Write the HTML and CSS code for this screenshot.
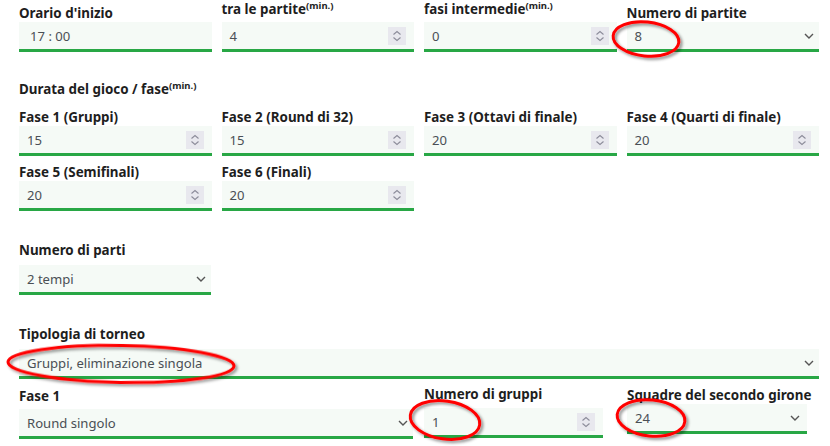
FILE: index.html
```html
<!DOCTYPE html>
<html lang="it">
<head>
<meta charset="utf-8">
<title>Impostazioni torneo</title>
<link rel="stylesheet" href="styles.css">
</head>
<body>
<div class="page">
  <div class="grid4 row-a">
    <div class="field">
      <div class="label">Orario d'inizio</div>
      <div class="control time"><span class="val">17 : 00</span></div>
    </div>
    <div class="field">
      <div class="label lbl-sup">tra le partite<sup>(min.)</sup></div>
      <div class="control"><span class="val">4</span><span class="spin"><svg width="18" height="18" viewBox="0 0 18 18"><path d="M5.5 7.5 L9 4.5 L12.5 7.5 M5.5 10.5 L9 13.5 L12.5 10.5" fill="none" stroke="#8c8c9a" stroke-width="1.1"/></svg></span></div>
    </div>
    <div class="field">
      <div class="label lbl-sup">fasi intermedie<sup>(min.)</sup></div>
      <div class="control"><span class="val">0</span><span class="spin"><svg width="18" height="18" viewBox="0 0 18 18"><path d="M5.5 7.5 L9 4.5 L12.5 7.5 M5.5 10.5 L9 13.5 L12.5 10.5" fill="none" stroke="#8c8c9a" stroke-width="1.1"/></svg></span></div>
    </div>
    <div class="field">
      <div class="label">Numero di partite</div>
      <div class="control select"><span class="val">8</span><svg class="chev" width="10" height="6" viewBox="0 0 10 6"><path d="M1 1 L5 5 L9 1" fill="none" stroke="#555" stroke-width="1.4"/></svg></div>
    </div>
  </div>

  <div class="label title">Durata del gioco / fase<sup>(min.)</sup></div>

  <div class="grid4 row-b">
    <div class="field">
      <div class="label">Fase 1 (Gruppi)</div>
      <div class="control"><span class="val">15</span><span class="spin"><svg width="18" height="18" viewBox="0 0 18 18"><path d="M5.5 7.5 L9 4.5 L12.5 7.5 M5.5 10.5 L9 13.5 L12.5 10.5" fill="none" stroke="#8c8c9a" stroke-width="1.1"/></svg></span></div>
    </div>
    <div class="field">
      <div class="label">Fase 2 (Round di 32)</div>
      <div class="control"><span class="val">15</span><span class="spin"><svg width="18" height="18" viewBox="0 0 18 18"><path d="M5.5 7.5 L9 4.5 L12.5 7.5 M5.5 10.5 L9 13.5 L12.5 10.5" fill="none" stroke="#8c8c9a" stroke-width="1.1"/></svg></span></div>
    </div>
    <div class="field">
      <div class="label">Fase 3 (Ottavi di finale)</div>
      <div class="control"><span class="val">20</span><span class="spin"><svg width="18" height="18" viewBox="0 0 18 18"><path d="M5.5 7.5 L9 4.5 L12.5 7.5 M5.5 10.5 L9 13.5 L12.5 10.5" fill="none" stroke="#8c8c9a" stroke-width="1.1"/></svg></span></div>
    </div>
    <div class="field">
      <div class="label">Fase 4 (Quarti di finale)</div>
      <div class="control"><span class="val">20</span><span class="spin"><svg width="18" height="18" viewBox="0 0 18 18"><path d="M5.5 7.5 L9 4.5 L12.5 7.5 M5.5 10.5 L9 13.5 L12.5 10.5" fill="none" stroke="#8c8c9a" stroke-width="1.1"/></svg></span></div>
    </div>
  </div>

  <div class="grid4 row-c">
    <div class="field">
      <div class="label">Fase 5 (Semifinali)</div>
      <div class="control"><span class="val">20</span><span class="spin"><svg width="18" height="18" viewBox="0 0 18 18"><path d="M5.5 7.5 L9 4.5 L12.5 7.5 M5.5 10.5 L9 13.5 L12.5 10.5" fill="none" stroke="#8c8c9a" stroke-width="1.1"/></svg></span></div>
    </div>
    <div class="field">
      <div class="label">Fase 6 (Finali)</div>
      <div class="control"><span class="val">20</span><span class="spin"><svg width="18" height="18" viewBox="0 0 18 18"><path d="M5.5 7.5 L9 4.5 L12.5 7.5 M5.5 10.5 L9 13.5 L12.5 10.5" fill="none" stroke="#8c8c9a" stroke-width="1.1"/></svg></span></div>
    </div>
  </div>

  <div class="field parti">
    <div class="label spaced">Numero di parti</div>
    <div class="control select"><span class="val">2 tempi</span><svg class="chev" width="10" height="6" viewBox="0 0 10 6"><path d="M1 1 L5 5 L9 1" fill="none" stroke="#555" stroke-width="1.4"/></svg></div>
  </div>

  <div class="field tipologia">
    <div class="label spaced">Tipologia di torneo</div>
    <div class="control select"><span class="val">Gruppi, eliminazione singola</span><svg class="chev" width="10" height="6" viewBox="0 0 10 6"><path d="M1 1 L5 5 L9 1" fill="none" stroke="#555" stroke-width="1.4"/></svg></div>
  </div>

  <div class="last-row">
    <div class="field f-fase1">
      <div class="label">Fase 1</div>
      <div class="control select"><span class="val">Round singolo</span><svg class="chev" width="10" height="6" viewBox="0 0 10 6"><path d="M1 1 L5 5 L9 1" fill="none" stroke="#555" stroke-width="1.4"/></svg></div>
    </div>
    <div class="field f-gruppi">
      <div class="label">Numero di gruppi</div>
      <div class="control"><span class="val">1</span><span class="spin"><svg width="18" height="18" viewBox="0 0 18 18"><path d="M5.5 7.5 L9 4.5 L12.5 7.5 M5.5 10.5 L9 13.5 L12.5 10.5" fill="none" stroke="#8c8c9a" stroke-width="1.1"/></svg></span></div>
    </div>
    <div class="field f-squadre">
      <div class="label">Squadre del secondo girone</div>
      <div class="control select"><span class="val">24</span><svg class="chev" width="10" height="6" viewBox="0 0 10 6"><path d="M1 1 L5 5 L9 1" fill="none" stroke="#555" stroke-width="1.4"/></svg></div>
    </div>
  </div>

  <svg class="annot" width="830" height="446" viewBox="0 0 830 446">
    <defs>
      <filter id="sh" x="-20%" y="-40%" width="140%" height="180%">
        <feDropShadow dx="2" dy="2" stdDeviation="1.5" flood-color="#000" flood-opacity="0.45"/>
      </filter>
    </defs>
    <g fill="none" stroke="#ff0000" stroke-width="3" filter="url(#sh)">
      <ellipse cx="646" cy="39" rx="33" ry="17" transform="rotate(6 646 39)"/>
      <ellipse cx="121" cy="364" rx="113" ry="18.5" transform="rotate(1 121 364)"/>
      <ellipse cx="445" cy="420" rx="35" ry="19" transform="rotate(8 445 420)"/>
      <ellipse cx="651" cy="418" rx="34" ry="18" transform="rotate(6 651 418)"/>
    </g>
  </svg>
</div>
</body>
</html>
```
FILE: styles.css
```css
* { box-sizing: border-box; }
html, body { margin: 0; padding: 0; background: #fff; }
body {
  font-family: "Noto Sans", "Open Sans", "Liberation Sans", sans-serif;
  color: #212529;
}
.page {
  position: relative;
  width: 830px;
  height: 446px;
  padding: 0 11px 0 19px;
  overflow: hidden;
}
.grid4 {
  display: grid;
  grid-template-columns: repeat(4, 1fr);
  column-gap: 10px;
}
.field {
  display: flex;
  flex-direction: column;
  justify-content: flex-end;
}
.label {
  font-size: 13.4px;
  font-weight: 700;
  line-height: 18px;
  white-space: nowrap;
  color: #1e1e1e;
}
.label sup {
  font-size: 9.5px;
  line-height: 0;
  vertical-align: 5px;
}
.lbl-sup { margin-bottom: 4px; }
.control {
  height: 30px;
  background: #f5faf6;
  border-bottom: 3px solid #28a745;
  display: flex;
  align-items: center;
  padding: 0 8px;
  font-size: 13.1px;
  color: #4a4f55;
}
.control .val { flex: 1; white-space: nowrap; }
.control.time { padding-left: 11px; }
.spin {
  width: 18px;
  height: 18px;
  background: #e8e8ee;
  display: flex;
}
.select { padding-right: 5px; }
.chev { flex: none; }
.title { margin-top: 28px; }
.row-b { margin-top: 10px; }
.row-c { margin-top: 7px; }
.parti { width: 192px; margin-top: 30px; }
.spaced { margin-bottom: 6px; }
.tipologia { margin-top: 30px; }
.last-row {
  display: flex;
  align-items: flex-start;
  margin-top: 6px;
}
.f-fase1 { width: 394px; }
.f-fase1 .label { margin-top: 2px; margin-bottom: 4px; }
.f-gruppi { width: 179px; margin-left: 11px; }
.f-gruppi .label { margin-bottom: 5px; }
.f-squadre { width: 180px; margin-left: 24px; }
.f-squadre .label { margin-top: 1px; }
.f-squadre .select { padding-right: 7px; }
.annot {
  position: absolute;
  left: 0;
  top: 0;
  pointer-events: none;
}
```
